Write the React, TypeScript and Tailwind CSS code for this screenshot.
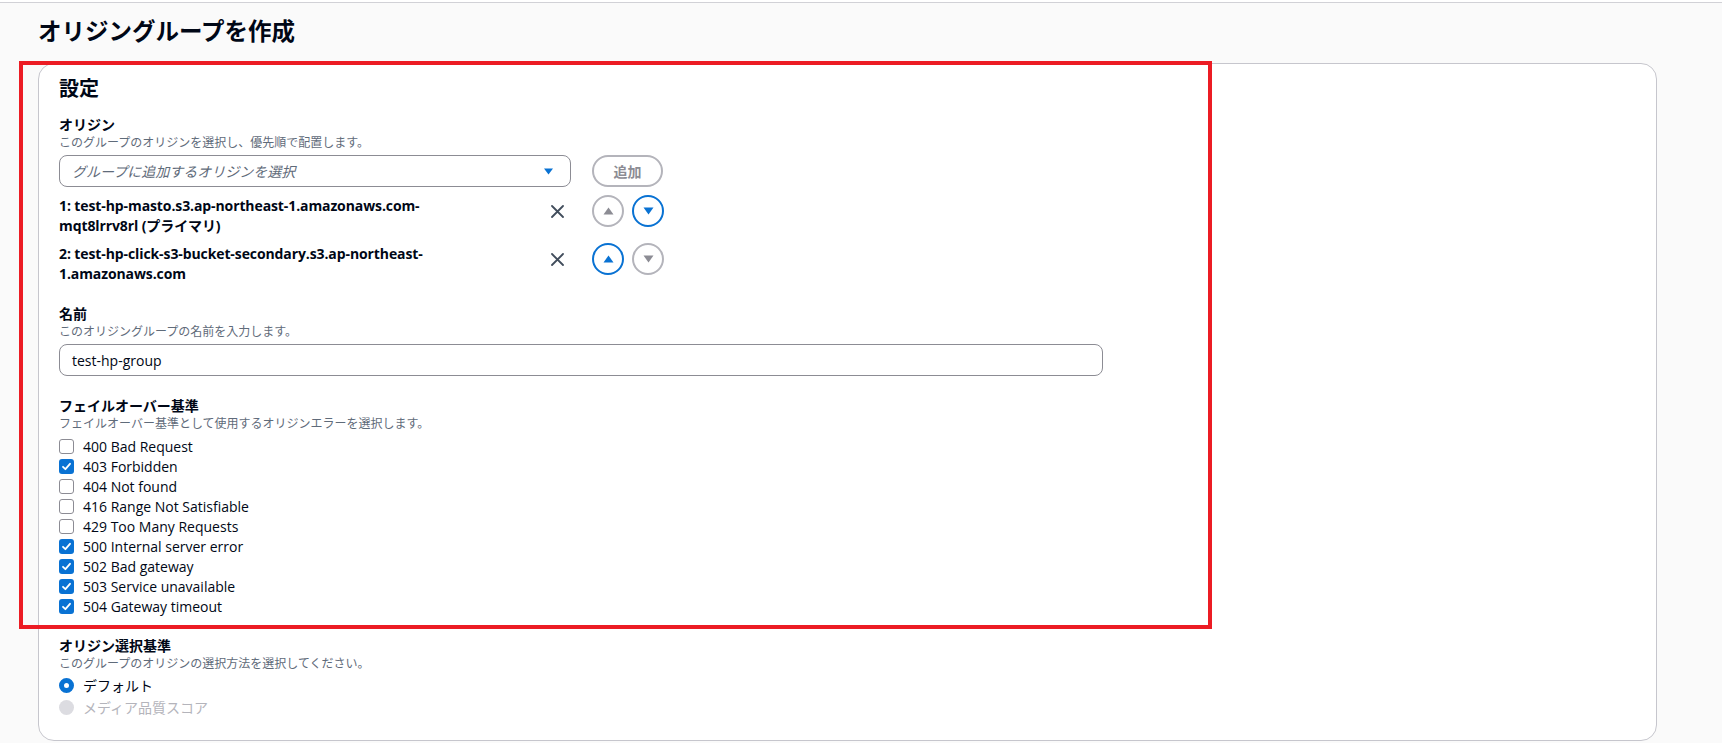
import { FC } from "react";

type Origin = {
  lines: string[];
  canUp: boolean;
  canDown: boolean;
};

const origins: Origin[] = [
  {
    lines: ["1: test-hp-masto.s3.ap-northeast-1.amazonaws.com-", "mqt8lrrv8rl (プライマリ)"],
    canUp: false,
    canDown: true,
  },
  {
    lines: ["2: test-hp-click-s3-bucket-secondary.s3.ap-northeast-", "1.amazonaws.com"],
    canUp: true,
    canDown: false,
  },
];

const errors = [
  { label: "400 Bad Request", checked: false },
  { label: "403 Forbidden", checked: true },
  { label: "404 Not found", checked: false },
  { label: "416 Range Not Satisfiable", checked: false },
  { label: "429 Too Many Requests", checked: false },
  { label: "500 Internal server error", checked: true },
  { label: "502 Bad gateway", checked: true },
  { label: "503 Service unavailable", checked: true },
  { label: "504 Gateway timeout", checked: true },
];

const Triangle: FC<{ up: boolean; color: string }> = ({ up, color }) => (
  <svg width="11" height="8" viewBox="0 0 11 8">
    {up ? <path d="M5.5 0.5 L10.5 7.5 L0.5 7.5 Z" fill={color} /> : <path d="M0.5 0.5 L10.5 0.5 L5.5 7.5 Z" fill={color} />}
  </svg>
);

const ArrowButton: FC<{ up: boolean; active: boolean }> = ({ up, active }) => (
  <button
    className={
      active
        ? "w-[32px] h-[32px] rounded-full border-2 border-[#0972d3] bg-white flex items-center justify-center"
        : "w-[32px] h-[32px] rounded-full border-2 border-[#b4b4bb] bg-white flex items-center justify-center"
    }
  >
    <Triangle up={up} color={active ? "#0972d3" : "#8c8c94"} />
  </button>
);

const Section: FC<{ label: string; desc: string; children: React.ReactNode }> = ({ label, desc, children }) => (
  <div className="flex flex-col">
    <div className="text-[14px] leading-[20px] font-bold text-[#000716]">{label}</div>
    <div className="text-[12px] leading-[16px] text-[#5f6b7a]">{desc}</div>
    <div className="mt-1">{children}</div>
  </div>
);

const Checkbox: FC<{ checked: boolean }> = ({ checked }) =>
  checked ? (
    <span className="w-[15px] h-[15px] rounded-[3px] bg-[#0972d3] flex items-center justify-center shrink-0">
      <svg width="11" height="11" viewBox="0 0 11 11">
        <path d="M2 5.8 L4.4 8.2 L9 2.8" stroke="white" strokeWidth="1.8" fill="none" strokeLinecap="round" strokeLinejoin="round" />
      </svg>
    </span>
  ) : (
    <span className="w-[15px] h-[15px] rounded-[3px] border-[1.5px] border-[#8c8c94] bg-white shrink-0" />
  );

export default function App() {
  return (
    <div className="relative min-h-screen bg-[#fafafa] font-['Open_Sans','Noto_Sans_CJK_JP',sans-serif] text-[#000716]">
      <div className="h-[2px] bg-white" />
      <div className="h-px bg-[#d1d1d6]" />

      <h1 className="mt-[12px] ml-[38px] text-[23.5px] leading-[32px] font-bold">オリジングループを作成</h1>

      <div className="mt-[16px] ml-[38px] w-[1619px] rounded-[16px] border border-[#c6c6cd] bg-white pl-[20px] pt-[11px] pb-[22px]">
        <h2 className="text-[20px] leading-[28px] font-bold">設定</h2>

        <div className="mt-[12px] flex flex-col gap-[20px]">
          <Section label="オリジン" desc="このグループのオリジンを選択し、優先順で配置します。">
            <div className="flex items-center">
              <div className="w-[512px] h-[32px] rounded-lg border border-[#8c8c94] bg-white flex items-center justify-between pl-[12px] pr-[17px]">
                <span className="text-[14px] italic text-[#5f6b7a]">グループに追加するオリジンを選択</span>
                <svg width="9" height="7" viewBox="0 0 9 7">
                  <path d="M0 0.5 L9 0.5 L4.5 6.5 Z" fill="#0972d3" />
                </svg>
              </div>
              <button className="ml-[21px] w-[71px] h-[32px] rounded-full border-2 border-[#b4b4bb] bg-white text-[14px] font-bold text-[#8c8c94]">
                追加
              </button>
            </div>

            <div className="mt-[8px] flex flex-col gap-[7px]">
              {origins.map((o, i) => (
                <div key={i} className="flex items-start">
                  <div className="w-[478px] pt-[1px] text-[14px] leading-[20px] font-bold tracking-[-0.1px]">
                    {o.lines.map((l) => (
                      <div key={l}>{l}</div>
                    ))}
                  </div>
                  <button className="w-[40px] h-[32px] flex items-center justify-center">
                    <svg width="13" height="13" viewBox="0 0 13 13">
                      <path d="M1 1 L12 12 M12 1 L1 12" stroke="#414d5c" strokeWidth="1.8" strokeLinecap="round" />
                    </svg>
                  </button>
                  <div className="ml-[15px] flex gap-[8px]">
                    <ArrowButton up active={o.canUp} />
                    <ArrowButton up={false} active={o.canDown} />
                  </div>
                </div>
              ))}
            </div>
          </Section>

          <Section label="名前" desc="このオリジングループの名前を入力します。">
            <div className="w-[1044px] h-[32px] rounded-lg border border-[#8c8c94] bg-white flex items-center pl-[12px] text-[14px]">
              test-hp-group
            </div>
          </Section>

          <Section label="フェイルオーバー基準" desc="フェイルオーバー基準として使用するオリジンエラーを選択します。">
            <div className="flex flex-col">
              {errors.map((e) => (
                <label key={e.label} className="h-[20px] flex items-center gap-[9px] text-[14px]">
                  <Checkbox checked={e.checked} />
                  <span>{e.label}</span>
                </label>
              ))}
            </div>
          </Section>

          <Section label="オリジン選択基準" desc="このグループのオリジンの選択方法を選択してください。">
            <div className="-mt-[2px] flex flex-col">
              <div className="h-[22px] flex items-center gap-[9px] text-[14px]">
                <span className="w-[15px] h-[15px] rounded-full border-[5px] border-[#0972d3] bg-white shrink-0" />
                <span>デフォルト</span>
              </div>
              <div className="h-[22px] flex items-center gap-[9px] text-[14px] text-[#b4b4bb]">
                <span className="w-[15px] h-[15px] rounded-full bg-[#dcdce1] shrink-0" />
                <span>メディア品質スコア</span>
              </div>
            </div>
          </Section>
        </div>
      </div>

      <div className="pointer-events-none absolute left-[19px] top-[61px] w-[1193px] h-[568px] border-4 border-[#ec1c24] z-10" />
    </div>
  );
}
